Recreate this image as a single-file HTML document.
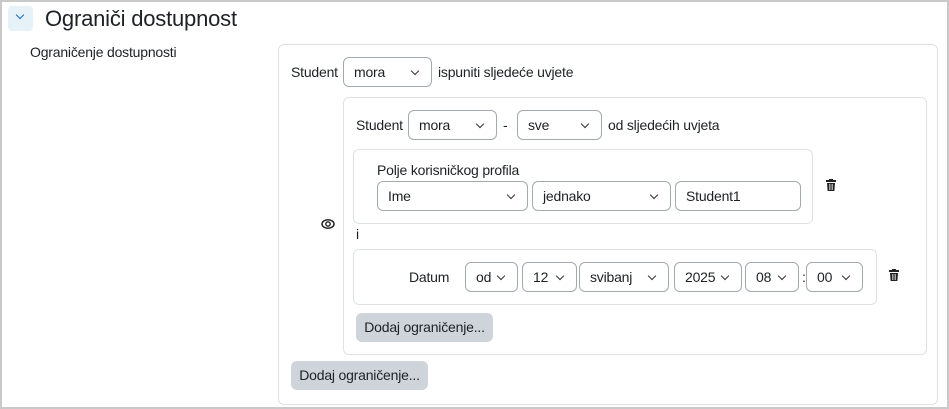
<!DOCTYPE html>
<html><head><meta charset="utf-8"><style>
*{box-sizing:border-box;margin:0;padding:0}
body{width:949px;height:409px;background:#fff;font-family:"Liberation Sans",sans-serif;color:#1d2125;position:relative;overflow:hidden;font-size:14px}
.a{position:absolute}
.frame{left:0;top:0;width:949px;height:409px;border:2px solid #c9c9c9}
.box{border:1px solid #dee2e6;border-radius:6px;background:#fff}
.sel{position:absolute;border:1px solid #a4a9ae;border-radius:6px;background:#fff;height:30px;line-height:28px;padding-left:10px;font-size:14px;letter-spacing:-0.2px}
.sel::after{content:"";position:absolute;right:13px;top:10px;width:5px;height:5px;border-right:1px solid #333;border-bottom:1px solid #333;transform:rotate(45deg)}
.sel.noa::after{display:none}
.txt{position:absolute;font-size:14px;line-height:18px;letter-spacing:-0.2px}
.btn{position:absolute;background:#ced4da;border-radius:6px;height:29px;line-height:29px;text-align:center;font-size:14px;color:#1d2125;letter-spacing:-0.2px}
.trash{position:absolute;width:10px;height:12px}
</style></head><body>
<div class="a frame"></div>
<div class="a" style="left:8px;top:6px;width:25px;height:25px;background:#e7f1f8;border-radius:4px"></div>
<div class="a" style="left:17px;top:12px;width:6px;height:6px;border-right:1.5px solid #0f6cbf;border-bottom:1.5px solid #0f6cbf;transform:rotate(45deg)"></div>
<div class="txt" style="left:45px;top:5px;font-size:22px;line-height:28px">Ograniči dostupnost</div>
<div class="txt" style="left:30px;top:43px">Ograničenje dostupnosti</div>

<div class="a box" style="left:278px;top:44px;width:660px;height:361px"></div>
<div class="txt" style="left:291px;top:63px">Student</div>
<div class="sel" style="left:343px;top:57px;width:89px">mora</div>
<div class="txt" style="left:438px;top:63px">ispuniti sljedeće uvjete</div>

<div class="a box" style="left:343px;top:97px;width:584px;height:258px"></div>
<svg class="a" style="left:321px;top:218px" width="14" height="12" viewBox="0 0 14 12"><ellipse cx="7" cy="6" rx="6" ry="4.3" fill="none" stroke="#222" stroke-width="1.5"/><circle cx="7" cy="6" r="2.2" fill="none" stroke="#222" stroke-width="1.4"/></svg>
<div class="txt" style="left:356px;top:116px">Student</div>
<div class="sel" style="left:408px;top:110px;width:89px">mora</div>
<div class="txt" style="left:503px;top:116px">-</div>
<div class="sel" style="left:517px;top:110px;width:85px">sve</div>
<div class="txt" style="left:608px;top:116px">od sljedećih uvjeta</div>

<div class="a box" style="left:353px;top:149px;width:460px;height:75px"></div>
<div class="txt" style="left:377px;top:161px">Polje korisničkog profila</div>
<div class="sel" style="left:377px;top:181px;width:151px">Ime</div>
<div class="sel" style="left:532px;top:181px;width:139px">jednako</div>
<div class="sel noa" style="left:675px;top:181px;width:126px">Student1</div>
<svg class="trash" style="left:826px;top:179px" viewBox="0 0 10 12"><rect x="0" y="1" width="10" height="2" fill="#222"/><rect x="3" y="0" width="4" height="2" fill="#222"/><path d="M1 4h8l-.6 8H1.6z" fill="#222"/><path d="M3.5 5v6M5 5v6M6.5 5v6" stroke="#fff" stroke-width=".6"/></svg>
<div class="txt" style="left:356px;top:225px">i</div>

<div class="a box" style="left:353px;top:249px;width:524px;height:56px"></div>
<div class="txt" style="left:409px;top:268px">Datum</div>
<div class="sel" style="left:465px;top:262px;width:53px">od</div>
<div class="sel" style="left:522px;top:262px;width:55px">12</div>
<div class="sel" style="left:579px;top:262px;width:90px">svibanj</div>
<div class="sel" style="left:674px;top:262px;width:68px">2025</div>
<div class="sel" style="left:745px;top:262px;width:54px">08</div>
<div class="txt" style="left:802px;top:268px">:</div>
<div class="sel" style="left:806px;top:262px;width:57px">00</div>
<svg class="trash" style="left:889px;top:269px" viewBox="0 0 10 12"><rect x="0" y="1" width="10" height="2" fill="#222"/><rect x="3" y="0" width="4" height="2" fill="#222"/><path d="M1 4h8l-.6 8H1.6z" fill="#222"/><path d="M3.5 5v6M5 5v6M6.5 5v6" stroke="#fff" stroke-width=".6"/></svg>

<div class="btn" style="left:356px;top:313px;width:137px">Dodaj ograničenje...</div>
<div class="btn" style="left:291px;top:361px;width:137px">Dodaj ograničenje...</div>
</body></html>
